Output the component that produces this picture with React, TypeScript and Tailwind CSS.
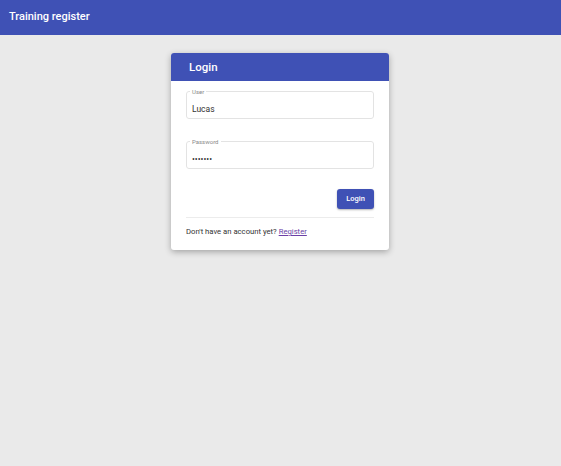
import { useState } from "react";

function OutlinedField({ label, value, type = "text" }: { label: string; value: string; type?: string }) {
  const [val, setVal] = useState(value);
  return (
    <div className="relative h-[28px] rounded-[3px] border border-[#e3e3e3]">
      <span className="absolute left-[3px] top-[-4px] bg-white px-[2px] text-[6px] leading-[7px] text-[#8a8a8a]">{label}</span>
      <input
        type={type}
        value={val}
        onChange={(e) => setVal(e.target.value)}
        className="absolute left-[5px] right-[5px] top-[10px] h-[14px] bg-transparent text-[8.5px] text-[#333] outline-none"
      />
    </div>
  );
}

export default function App() {
  return (
    <div className="min-h-[466px] bg-[#eaeaea] font-['Roboto',sans-serif]">
      <header className="flex h-[35px] items-center bg-[#3f51b5] px-[9px]">
        <h1 className="text-[11px] font-medium text-white">Training register</h1>
      </header>
      <div className="flex justify-center pt-[18px]">
        <div className="ml-[-1px] w-[218px] overflow-hidden rounded-[3px] bg-white shadow-[0_2px_6px_rgba(0,0,0,0.3)]">
          <div className="flex h-[28px] items-center bg-[#3f51b5] pl-[18px] pt-[2px]">
            <span className="text-[11.5px] font-medium text-white">Login</span>
          </div>
          <div className="px-[15px] pb-[12px] pt-[10px]">
            <OutlinedField label="User" value="Lucas" />
            <div className="mt-[22px]">
              <OutlinedField label="Password" value="1234567" type="password" />
            </div>
            <div className="mt-[20px] flex justify-end">
              <button className="h-[20px] w-[37px] rounded-[3px] bg-[#3f51b5] text-[7.5px] font-medium text-white shadow-[0_1px_2px_rgba(0,0,0,0.3)]">
                Login
              </button>
            </div>
            <div className="mt-[8px] border-t border-[#ececec] pt-[8px] text-[7.7px] leading-[12px] text-[#333]">
              Don't have an account yet?{" "}
              <a href="#" className="text-[#6b3fa6] underline">
                Register
              </a>
            </div>
          </div>
        </div>
      </div>
    </div>
  );
}
